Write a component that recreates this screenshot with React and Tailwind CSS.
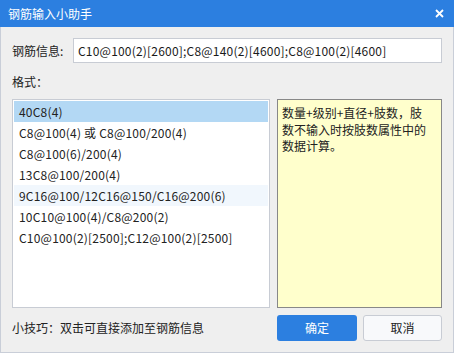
import React from "react";

const rows = [
  "40C8(4)",
  "C8@100(4) 或 C8@100/200(4)",
  "C8@100(6)/200(4)",
  "13C8@100/200(4)",
  "9C16@100/12C16@150/C16@200(6)",
  "10C10@100(4)/C8@200(2)",
  "C10@100(2)[2500];C12@100(2)[2500]",
];

export default function App() {
  const font = { fontFamily: '"Microsoft YaHei", "Noto Sans CJK SC", "Noto Sans", sans-serif' };
  return (
    <div className="w-[454px] h-[353px] flex flex-col bg-[#efefef] text-[12px] text-[#222] border-x border-b border-[#c9ced8]" style={font}>
      <div className="h-[27px] -mx-px bg-[#2c7fe0] flex items-center justify-between pl-[8px] pr-[10px] text-white">
        <span className="leading-none">钢筋输入小助手</span>
        <svg width="9" height="9" viewBox="0 0 9 9">
          <path d="M1 1L8 8M8 1L1 8" stroke="white" strokeWidth="1.8" />
        </svg>
      </div>
      <div className="flex-1 flex flex-col px-[11px] pt-[11px] pb-[11px]">
        <div className="flex items-center h-[25px]">
          <span className="w-[61px]">钢筋信息:</span>
          <div className="flex-1 h-[25px] bg-white border border-[#c8ccd4] flex items-center pl-[4px] text-[#1a1a1a] tracking-[0.2px]">
            C10@100(2)[2600];C8@140(2)[4600];C8@100(2)[4600]
          </div>
        </div>
        <div className="mt-[11px] h-[16px] flex items-center">格式：</div>
        <div className="mt-[9px] flex gap-[7px] h-[209px]">
          <div className="w-[258px] bg-white border border-[#c8ccd4] pt-px px-px flex flex-col tracking-[0.2px]">
            {rows.map((r, i) => (
              <div
                key={i}
                className={
                  "h-[21px] flex items-center pl-[5px] " +
                  (i === 0 ? "bg-[#b3d8f4]" : i === 4 ? "bg-[#f1f7fd]" : "")
                }
              >
                {r}
              </div>
            ))}
          </div>
          <div className="flex-1 bg-[#ffffcc] border border-[#888] pl-[4px] pr-[9px] pt-[5px] leading-[16.5px]">
            数量+级别+直径+肢数，肢数不输入时按肢数属性中的数据计算。
          </div>
        </div>
        <div className="mt-[7px] flex items-center">
          <span className="flex-1">小技巧：双击可直接添加至钢筋信息</span>
          <button className="w-[80px] h-[26px] rounded-[3px] bg-[#2c7fe0] text-white">确定</button>
          <button className="ml-[6px] w-[79px] h-[26px] rounded-[3px] bg-[#f8f9fb] border border-[#c8ccd4] text-[#222]">取消</button>
        </div>
      </div>
    </div>
  );
}
